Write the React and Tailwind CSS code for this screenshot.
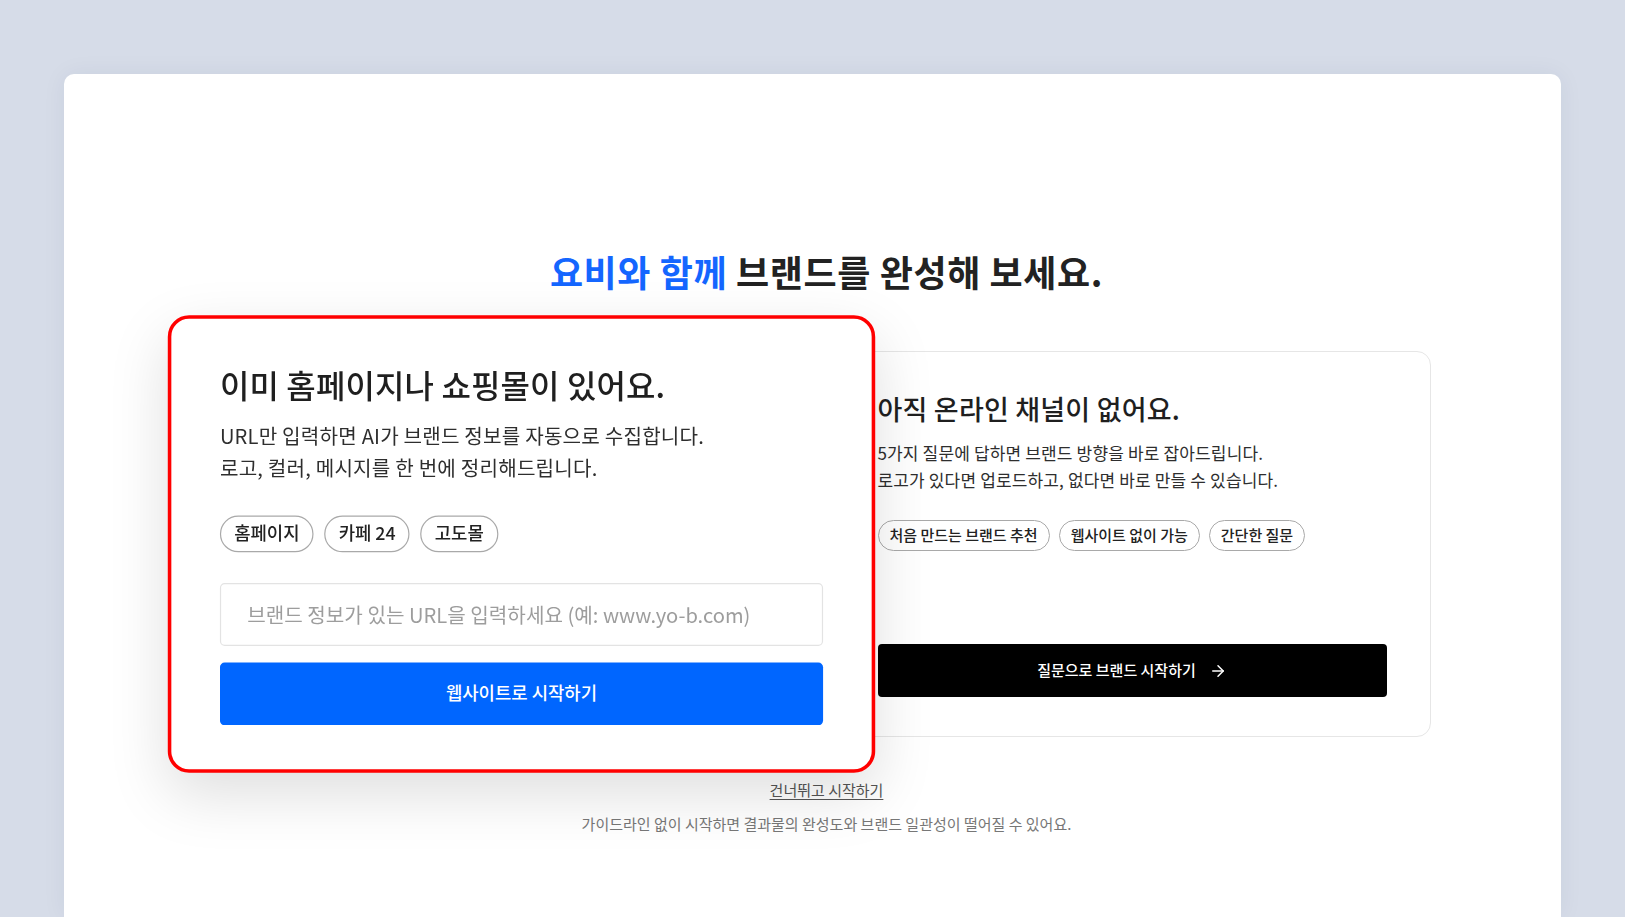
import React from "react";
import { ArrowRight } from "lucide-react";

function Chip({ children }) {
  return (
    <span className="flex h-[31px] items-center rounded-full border border-[#a9a9a9] bg-white px-[11px] text-[15px] font-medium text-[#222]">
      {children}
    </span>
  );
}

export default function App() {
  return (
    <div className="h-screen overflow-hidden bg-[#d6dce8] px-[64px] pt-[74px] font-['Noto_Sans_CJK_KR','Noto_Sans',sans-serif]">
      <div className="flex min-h-[843px] flex-col items-center rounded-t-[10px] bg-white pl-[28px] pt-[175px] shadow-[0_0_24px_rgba(40,50,80,0.06)]">
        <h1 className="text-[36px] font-bold leading-[44px] tracking-[0.6px] text-[#222]">
          <span className="text-[#1466ff]">요비와 함께</span> 브랜드를 완성해 보세요.
        </h1>

        <div className="mt-[58px] grid grid-cols-[597px_597px] gap-[14px]">
          {/* highlighted card */}
          <div className="relative z-10 flex h-[386px] scale-[1.185] flex-col rounded-[18px] border-[3.4px] border-[#ff0000] bg-white px-[41px] pb-[37px] pt-[38.5px] shadow-[0_18px_50px_rgba(0,0,0,0.13)]">
            <h2 className="text-[27px] font-medium leading-[34px] tracking-[0.1px] text-[#1f1f1f]">
              이미 홈페이지나 쇼핑몰이 있어요.
            </h2>
            <p className="mt-[12.5px] text-[17px] leading-[27px] tracking-[0.15px] text-[#2e2e2e]">
              URL만 입력하면 AI가 브랜드 정보를 자동으로 수집합니다.
              <br />
              로고, 컬러, 메시지를 한 번에 정리해드립니다.
            </p>
            <div className="mt-[27px] flex gap-[9px]">
              <Chip>홈페이지</Chip>
              <Chip>카페 24</Chip>
              <Chip>고도몰</Chip>
            </div>
            <input
              type="text"
              placeholder="브랜드 정보가 있는 URL을 입력하세요 (예: www.yo-b.com)"
              className="mt-[26px] h-[53px] w-full rounded-[4px] border border-[#e3e3e3] px-[22px] text-[17px] text-[#222] outline-none placeholder:text-[#9d9d9d]"
            />
            <button className="mt-[14px] flex h-[53px] w-full items-center justify-center rounded-[4px] bg-[#0066ff] text-[15px] font-medium text-white">
              웹사이트로 시작하기
            </button>
          </div>

          {/* second card */}
          <div className="flex h-[386px] flex-col rounded-[14px] border border-[#e6e6e6] bg-white px-[43px] pb-[39px] pt-[40px]">
            <h2 className="text-[27px] font-medium leading-[34px] tracking-[0.2px] text-[#1f1f1f]">
              아직 온라인 채널이 없어요.
            </h2>
            <p className="mt-[13px] text-[17px] leading-[27px] tracking-[0.15px] text-[#2e2e2e]">
              5가지 질문에 답하면 브랜드 방향을 바로 잡아드립니다.
              <br />
              로고가 있다면 업로드하고, 없다면 바로 만들 수 있습니다.
            </p>
            <div className="mt-[27px] flex gap-[9px]">
              <Chip>처음 만드는 브랜드 추천</Chip>
              <Chip>웹사이트 없이 가능</Chip>
              <Chip>간단한 질문</Chip>
            </div>
            <button className="mt-auto flex h-[53px] w-full items-center justify-center gap-[13px] rounded-[4px] bg-black text-[15px] font-medium text-white">
              질문으로 브랜드 시작하기
              <ArrowRight size={18} strokeWidth={2} />
            </button>
          </div>
        </div>

        <a className="mt-[43px] text-[15px] leading-[20px] text-[#555] underline underline-offset-[3px]">
          건너뛰고 시작하기
        </a>
        <p className="mt-[14px] text-[15px] leading-[20px] text-[#777]">
          가이드라인 없이 시작하면 결과물의 완성도와 브랜드 일관성이 떨어질 수 있어요.
        </p>
      </div>
    </div>
  );
}
